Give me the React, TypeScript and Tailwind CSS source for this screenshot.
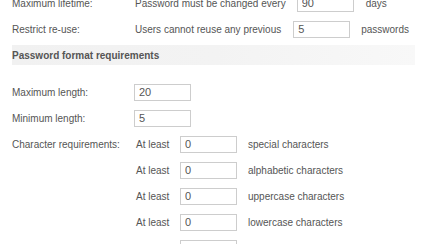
const font = { fontFamily: '"Liberation Sans", Arial, sans-serif' };

function Box({ value }: { value: string }) {
  return (
    <input
      readOnly
      defaultValue={value}
      className="w-[57px] h-[17px] border border-[#cdcdcd] bg-white pl-[4px] text-[11px] text-[#555] outline-none"
      style={font}
    />
  );
}

function Row({ label, children }: { label?: string; children: React.ReactNode }) {
  return (
    <div className="flex h-[26px] items-center">
      <div className="w-[123px] shrink-0">{label}</div>
      <div className="flex items-center">{children}</div>
    </div>
  );
}

const charReqs = [
  { value: '0', text: 'special characters' },
  { value: '0', text: 'alphabetic characters' },
  { value: '0', text: 'uppercase characters' },
  { value: '0', text: 'lowercase characters' },
  { value: '0', text: 'numeric characters' },
];

export default function App() {
  return (
    <div className="h-[244px] w-[430px] overflow-hidden bg-white text-[10px] text-[#555]" style={font}>
      <div className="-mt-[10px] pl-[12px]">
        <Row label="Maximum lifetime:">
          <span>Password must be changed every</span>
          <span className="ml-[11px]"><Box value="90" /></span>
          <span className="ml-[12px]">days</span>
        </Row>
        <Row label="Restrict re-use:">
          <span>Users cannot reuse any previous</span>
          <span className="ml-[12px]"><Box value="5" /></span>
          <span className="ml-[11px]">passwords</span>
        </Row>

        <div className="mt-[3px] flex h-[20px] w-[403px] items-center bg-gradient-to-r from-[#f1f1f1] via-[#f3f3f3] to-[#f8f8f8] font-bold">
          Password format requirements
        </div>

        <div className="mt-[14px]">
          <Row label="Maximum length:">
            <span className="-ml-[1px]"><Box value="20" /></span>
          </Row>
          <Row label="Minimum length:">
            <span className="-ml-[1px]"><Box value="5" /></span>
          </Row>
          {charReqs.map((req, i) => (
            <Row key={i} label={i === 0 ? 'Character requirements:' : undefined}>
              <span className="ml-[1px] w-[44px]">At least</span>
              <Box value={req.value} />
              <span className="ml-[11px]">{req.text}</span>
            </Row>
          ))}
        </div>
      </div>
    </div>
  );
}
